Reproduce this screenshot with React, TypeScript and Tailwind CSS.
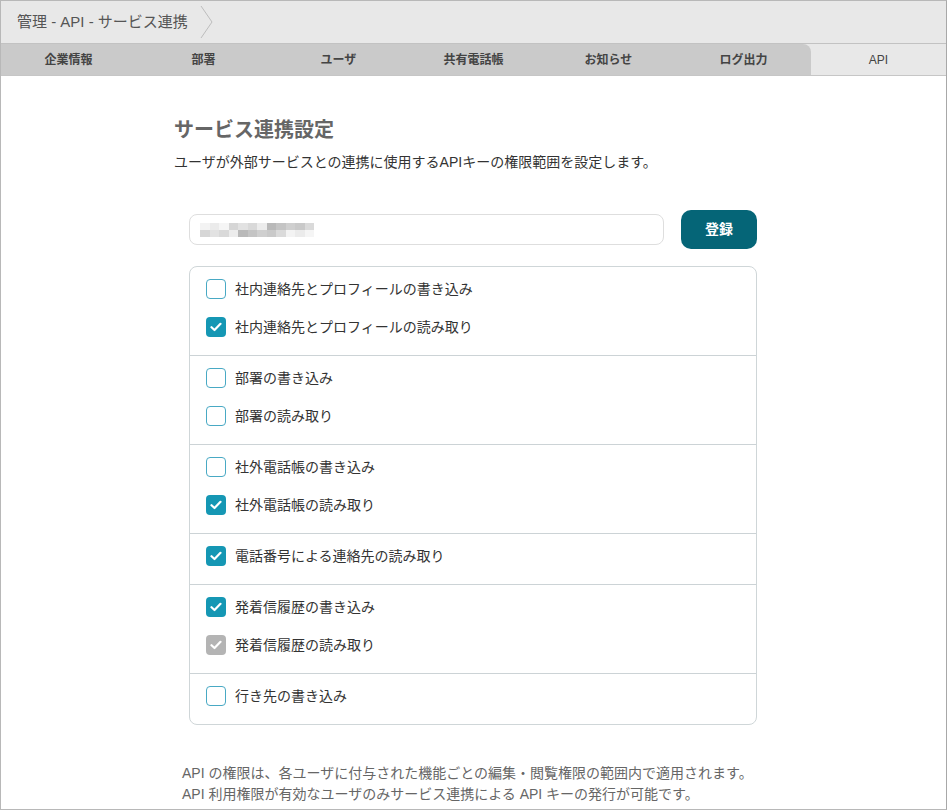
const TABS = ["企業情報", "部署", "ユーザ", "共有電話帳", "お知らせ", "ログ出力", "API"] as const;

type Perm = { label: string; state: "off" | "on" | "disabled" };

const GROUPS: Perm[][] = [
  [
    { label: "社内連絡先とプロフィールの書き込み", state: "off" },
    { label: "社内連絡先とプロフィールの読み取り", state: "on" },
  ],
  [
    { label: "部署の書き込み", state: "off" },
    { label: "部署の読み取り", state: "off" },
  ],
  [
    { label: "社外電話帳の書き込み", state: "off" },
    { label: "社外電話帳の読み取り", state: "on" },
  ],
  [{ label: "電話番号による連絡先の読み取り", state: "on" }],
  [
    { label: "発着信履歴の書き込み", state: "on" },
    { label: "発着信履歴の読み取り", state: "disabled" },
  ],
  [{ label: "行き先の書き込み", state: "off" }],
];

/* ぼかし済みのキー表示 */
const BLUR_CELLS = [
  "#f3f3f3", "#ebebeb", "#f5f5f5", "#d6d6d6", "#e2e2e2", "#d9d9d9", "#ececec",
  "#b9b9b9", "#c4c4c4", "#cfcfcf", "#c9c9c9", "#dadada",
];

function CheckBox({ state }: { state: Perm["state"] }) {
  if (state === "off") {
    return <span className="w-[20px] h-[20px] rounded-[4px] border border-[#49a9c4] bg-white shrink-0" />;
  }
  return (
    <span
      className={
        state === "on"
          ? "w-[20px] h-[20px] rounded-[4px] bg-[#1597b4] flex items-center justify-center shrink-0"
          : "w-[20px] h-[20px] rounded-[4px] bg-[#b4b4b4] flex items-center justify-center shrink-0"
      }
    >
      <svg width="12" height="10" viewBox="0 0 12 10" fill="none">
        <path d="M1.5 5.2 4.5 8 10.5 1.8" stroke="white" strokeWidth="2.2" strokeLinecap="round" strokeLinejoin="round" />
      </svg>
    </span>
  );
}

export default function App() {
  return (
    <div
      className="w-[947px] h-[810px] border border-[#b8b8b8] border-r-[#a8a8a8] bg-white flex flex-col overflow-hidden text-[#333]"
      style={{ fontFamily: '"Liberation Sans", "Noto Sans CJK JP", sans-serif' }}
    >
      {/* パンくず */}
      <div className="h-[42px] bg-[#e8e8e8] flex items-center shrink-0">
        <span className="pl-[16px] text-[15px] text-[#555]">管理 - API - サービス連携</span>
        <svg className="ml-[12px]" width="14" height="34" viewBox="0 0 14 34" fill="none">
          <path d="M1 1 12 17 1 33" stroke="#bdbdbd" strokeWidth="1" />
        </svg>
      </div>

      {/* タブ */}
      <div className="h-[33px] bg-[#e8e8e8] border-t border-[#c2c2c2] border-b border-b-[#c6c6c6] grid grid-cols-7 shrink-0">
        {TABS.map((t, i) => (
          <div
            key={t}
            className={
              t === "API"
                ? "flex items-center justify-center text-[12px] text-[#444] bg-[#e8e8e8]"
                : i === 5
                ? "flex items-center justify-center text-[12px] font-bold text-[#444] bg-[#cacaca] rounded-tr-[8px]"
                : "flex items-center justify-center text-[12px] font-bold text-[#444] bg-[#cacaca]"
            }
          >
            {t}
          </div>
        ))}
      </div>

      {/* 本文 */}
      <div className="flex-1 pl-[173px] pt-[40px]">
        <h1 className="text-[20px] font-bold text-[#666] leading-[28px]">サービス連携設定</h1>
        <p className="mt-[8px] text-[14px] text-[#333] leading-[20px]">
          ユーザが外部サービスとの連携に使用するAPIキーの権限範囲を設定します。
        </p>

        <div className="ml-[15px] w-[568px] mt-[38px]">
          <div className="flex items-center gap-[17px]">
            <div className="flex-1 h-[31px] rounded-[8px] border border-[#dedede] flex items-center pl-[10px]">
              <div className="flex flex-col">
                <div className="flex">
                  {BLUR_CELLS.map((c, i) => (
                    <span key={i} className="w-[9.5px] h-[7px]" style={{ background: c }} />
                  ))}
                </div>
                <div className="flex">
                  {BLUR_CELLS.map((c, i) => (
                    <span key={i} className="w-[9.5px] h-[7px]" style={{ background: BLUR_CELLS[(i + 3) % BLUR_CELLS.length] }} />
                  ))}
                </div>
              </div>
            </div>
            <button className="w-[76px] h-[39px] rounded-[10px] bg-[#056577] text-white text-[14px] font-bold">
              登録
            </button>
          </div>

          <div className="mt-[17px] rounded-[8px] border border-[#cfd6d8] divide-y divide-[#ccd3d6]">
            {GROUPS.map((g, gi) => (
              <div key={gi} className="pt-[3px] pb-[9px]">
                {g.map((p) => (
                  <label key={p.label} className="h-[38px] flex items-center gap-[9px] pl-[16px]">
                    <CheckBox state={p.state} />
                    <span className="text-[14px] text-[#333]">{p.label}</span>
                  </label>
                ))}
              </div>
            ))}
          </div>
        </div>

        <div className="mt-[38px] pl-[8px] text-[14px] text-[#666] leading-[21px]">
          <p>API の権限は、各ユーザに付与された機能ごとの編集・閲覧権限の範囲内で適用されます。</p>
          <p>API 利用権限が有効なユーザのみサービス連携による API キーの発行が可能です。</p>
        </div>
      </div>
    </div>
  );
}
